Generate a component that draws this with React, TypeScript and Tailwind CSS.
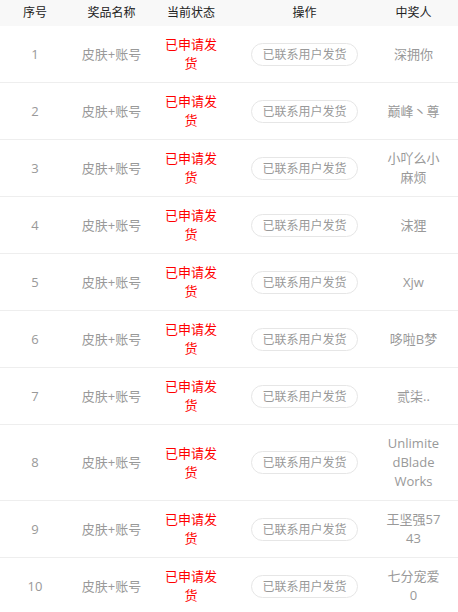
const rows = [
  { id: 1, winner: "深拥你" },
  { id: 2, winner: "巅峰丶尊" },
  { id: 3, winner: "小吖么小麻烦" },
  { id: 4, winner: "沫狸" },
  { id: 5, winner: "Xjw" },
  { id: 6, winner: "哆啦B梦" },
  { id: 7, winner: "贰柒.." },
  { id: 8, winner: "UnlimitedBlade Works" },
  { id: 9, winner: "王坚强5743" },
  { id: 10, winner: "七分宠爱0" },
];

const cols = "grid grid-cols-[70px_83px_76px_151px_78px] items-center text-center";

export default function App() {
  return (
    <div
      className="w-[458px] h-[612px] overflow-hidden bg-white"
      style={{ fontFamily: '"Open Sans", "Noto Sans CJK SC", sans-serif' }}
    >
      {/* header */}
      <div className={`${cols} h-[26px] bg-[#f8f8f8] text-[12px] text-[#222]`}>
        <div>序号</div>
        <div>奖品名称</div>
        <div>当前状态</div>
        <div>操作</div>
        <div className="pl-[5px] pr-[16px]">中奖人</div>
      </div>

      {rows.map((r) => (
        <div
          key={r.id}
          className={`${cols} py-[9px] border-b border-[#eee] text-[13px] leading-[19px] text-[#999]`}
        >
          <div>{r.id}</div>
          <div>皮肤+账号</div>
          <div className="px-[8px] text-[#ff0000] break-all">已申请发货</div>
          <div className="flex justify-center">
            <span className="inline-flex h-[23px] w-[107px] items-center justify-center rounded-full border border-[#e6e6e6] text-[12px] text-[#999]">
              已联系用户发货
            </span>
          </div>
          <div className="pl-[5px] pr-[16px] break-all">{r.winner}</div>
        </div>
      ))}
    </div>
  );
}
